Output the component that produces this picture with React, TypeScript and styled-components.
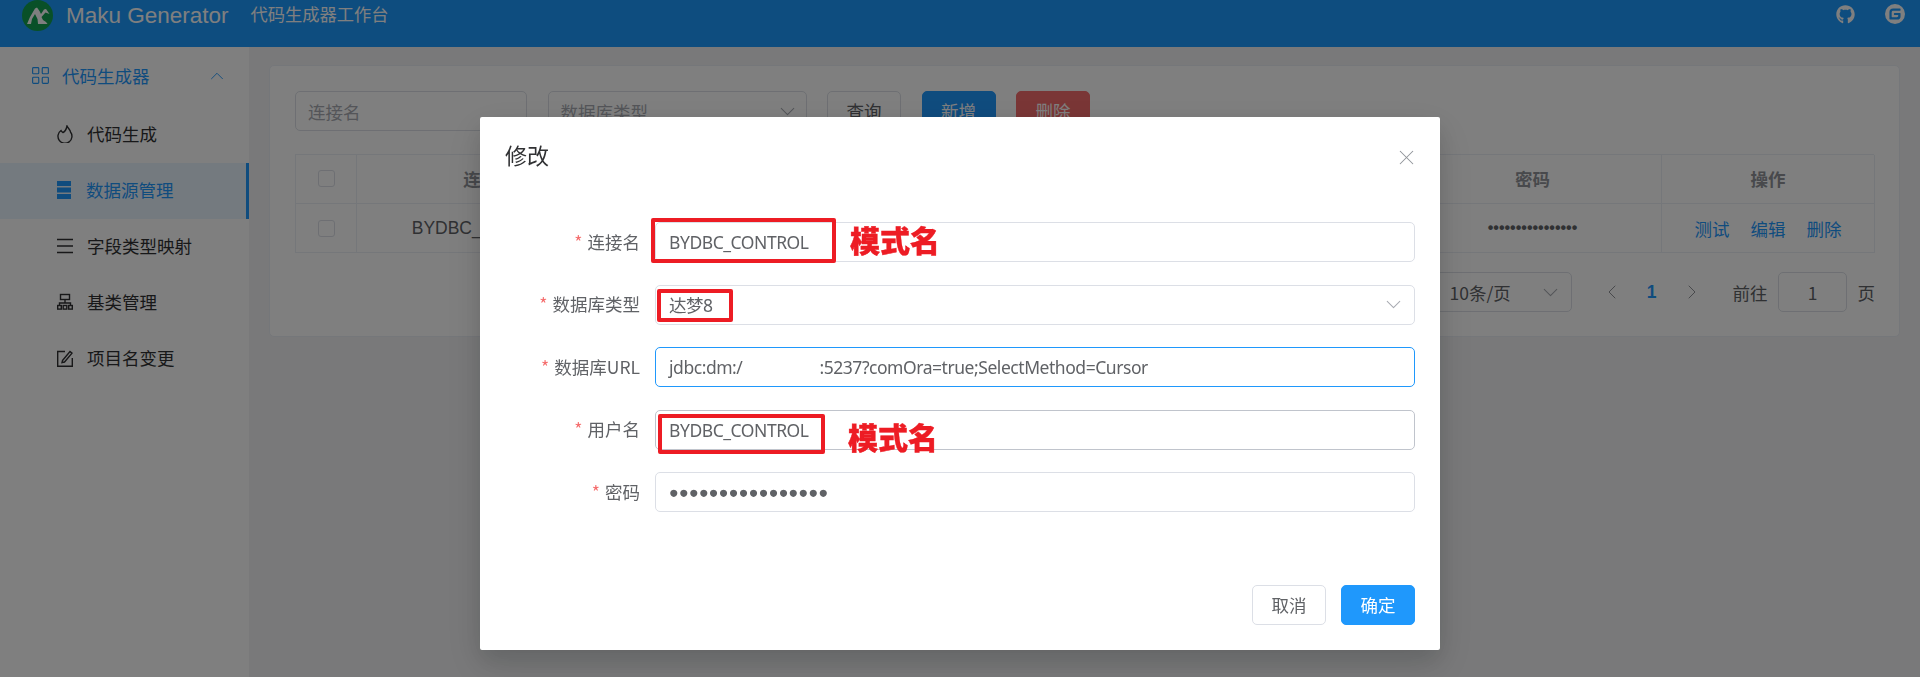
import styled, { createGlobalStyle } from "styled-components";
import { ChevronDown, ChevronLeft, ChevronRight, ChevronUp, LayoutGrid, X } from "lucide-react";
import { FaGithub } from "react-icons/fa";
import { SiGitee } from "react-icons/si";

const CJK = `"Noto Sans CJK SC", "Noto Sans", sans-serif`;
const ARIAL = `"Liberation Sans", "Noto Sans CJK SC", sans-serif`;
const BLUE = "#1f98fc";

const GlobalStyle = createGlobalStyle`
  html, body {
    margin: 0;
    height: 100%;
    overflow: hidden;
    background: #f2f3f5;
  }
  * { box-sizing: border-box; }
`;

const Page = styled.div`
  height: 677px;
  display: flex;
  flex-direction: column;
  font-family: ${ARIAL};
  font-size: 17.5px;
  color: #606266;
`;

const TopBar = styled.header`
  height: 47px;
  flex: none;
  background: #1c9aff;
  color: #fff;
  display: flex;
  padding: 0 15px 16px 22px;
`;
const Logo = styled.svg`
  width: 31px;
  height: 31px;
  margin-right: 13px;
`;
const Brand = styled.span`
  font-size: 22.5px;
  line-height: 31px;
  margin-right: 22px;
`;
const BrandSub = styled.span`
  font-family: ${CJK};
  font-size: 17.25px;
  line-height: 28px;
  flex: 1;
`;
const TopIcons = styled.div`
  display: flex;
  align-items: center;
  gap: 30px;
  height: 28px;
  svg { display: block; }
`;

const Body = styled.div`
  flex: 1;
  display: flex;
  min-height: 0;
`;
const Sidebar = styled.aside`
  width: 249px;
  flex: none;
  background: #fff;
  padding-top: 2px;
  font-family: ${CJK};
  color: #303133;
`;
const GroupTitle = styled.div`
  height: 56px;
  margin-bottom: 2px;
  padding: 0 21px 3px 29.5px;
  display: flex;
  align-items: center;
  gap: 11.5px;
  color: ${BLUE};
  span { flex: 1; }
`;
const MenuItem = styled.div<{ $active?: boolean }>`
  height: 56px;
  display: flex;
  align-items: center;
  gap: ${(p) => (p.$active ? 13 : 14)}px;
  padding: 0 0 3px 57px;
  color: ${(p) => (p.$active ? BLUE : "#303133")};
  background: ${(p) => (p.$active ? "#e9f4ff" : "transparent")};
  border-right: ${(p) => (p.$active ? `3px solid ${BLUE}` : "none")};
`;
const MenuIcon = styled.svg`
  width: 16px;
  height: 18px;
  flex: none;
`;

const Main = styled.main`
  flex: 1;
  min-width: 0;
  padding: 18px 20px;
`;
const Card = styled.section`
  background: #fff;
  border: 1px solid #ebeef5;
  border-radius: 5px;
  padding: 25px;
  height: 272px;
`;
const Filters = styled.div`
  display: flex;
  gap: 20.5px;
  margin-bottom: 23px;
`;
const FilterBox = styled.div<{ $w: number }>`
  width: ${(p) => p.$w}px;
  height: 40px;
  border: 1px solid #dcdfe6;
  border-radius: 5px;
  padding: 0 12px;
  display: flex;
  align-items: center;
  justify-content: space-between;
  color: #a8abb2;
  font-family: ${CJK};
`;
const Btn = styled.button<{ $kind?: "primary" | "danger" }>`
  width: 74px;
  height: 40px;
  border-radius: 5px;
  font-family: ${CJK};
  font-size: 17.5px;
  border: 1px solid ${(p) => (p.$kind === "primary" ? BLUE : p.$kind === "danger" ? "#f56c6c" : "#dcdfe6")};
  background: ${(p) => (p.$kind === "primary" ? BLUE : p.$kind === "danger" ? "#f56c6c" : "#fff")};
  color: ${(p) => (p.$kind ? "#fff" : "#606266")};
  padding: 0 0 2px;
`;
const Caret = styled(ChevronDown).attrs({ size: 25, strokeWidth: 1 })`
  flex: none;
  margin-right: -6px;
  color: #a8abb2;
`;

const Table = styled.div`
  display: grid;
  grid-template-columns: 61px 266px 260px 260px 261px 258px 213px;
  border-top: 1px solid #ebeef5;
  border-left: 1px solid #ebeef5;
`;
const Cell = styled.div<{ $head?: boolean }>`
  height: 49px;
  border-right: 1px solid #ebeef5;
  border-bottom: 1px solid #ebeef5;
  display: flex;
  align-items: center;
  justify-content: center;
  gap: 21px;
  padding-bottom: ${(p) => (p.$head ? 2 : 0)}px;
  color: ${(p) => (p.$head ? "#909399" : "#606266")};
  font-weight: ${(p) => (p.$head ? 700 : 400)};
  font-family: ${(p) => (p.$head ? CJK : ARIAL)};
`;
const Check = styled.i`
  width: 17px;
  height: 17px;
  border: 1px solid #dcdfe6;
  border-radius: 3px;
  background: #fff;
`;
const TableLink = styled.span`
  color: ${BLUE};
  font-family: ${CJK};
`;
const TableDots = styled.span`
  font-size: 16px;
  font-weight: 700;
`;

const Pager = styled.div`
  margin: 19px -1px 0 0;
  display: flex;
  justify-content: flex-end;
  align-items: center;
  height: 40px;
  font-family: ${CJK};
`;
const PageSize = styled.div`
  width: 137px;
  height: 40px;
  border: 1px solid #dcdfe6;
  border-radius: 5px;
  display: flex;
  align-items: center;
  justify-content: space-between;
  padding: 0 14px;
  margin-right: 28px;
`;
const PagerNum = styled.span`
  width: 56px;
  text-align: center;
  color: ${BLUE};
  font-family: ${ARIAL};
  font-weight: 700;
`;
const PagerLabel = styled.span`
  margin-left: 29px;
  color: #606266;
`;
const PagerInput = styled.div`
  width: 69px;
  height: 40px;
  margin: 0 10.5px;
  border: 1px solid #dcdfe6;
  border-radius: 5px;
  display: flex;
  align-items: center;
  justify-content: center;
`;
const PagerArrow = styled.span`
  display: flex;
  color: #909399;
`;

const Overlay = styled.div`
  position: fixed;
  inset: 0;
  background: rgba(0, 0, 0, 0.5);
  display: flex;
  justify-content: center;
  padding-top: 117px;
`;
const Dialog = styled.div`
  width: 960px;
  height: 533px;
  background: #fff;
  border-radius: 2px;
  padding: 25px;
  box-shadow: 0 15px 40px 5px rgba(0, 0, 0, 0.08), 0 10px 25px rgba(0, 0, 0, 0.12);
`;
const DialogHead = styled.div`
  display: flex;
  align-items: center;
  justify-content: space-between;
  height: 30px;
  margin-bottom: 50px;
  color: #303133;
  font-family: ${CJK};
  font-size: 22px;
  svg { margin-right: -3.5px; color: #909399; }
`;
const DialogTitle = styled.span`
  padding-bottom: 7px;
`;
const Form = styled.div`
  display: flex;
  flex-direction: column;
  gap: 22.5px;
`;
const Row = styled.div`
  display: flex;
  align-items: center;
  height: 40px;
`;
const Label = styled.label`
  width: 150px;
  flex: none;
  padding: 0 15px 2px 0;
  text-align: right;
  font-family: ${CJK};
  color: #606266;
  em {
    color: #f56c6c;
    font-style: normal;
    margin-right: 5px;
  }
`;
const Input = styled.div<{ $state?: "focus" | "hover" }>`
  position: relative;
  flex: 1;
  height: 40px;
  display: flex;
  align-items: center;
  padding: 0 14px 0 13px;
  border-radius: 5px;
  border: 1px solid
    ${(p) => (p.$state === "focus" ? BLUE : p.$state === "hover" ? "#c0c4cc" : "#dcdfe6")};
  font-family: "Noto Sans", "Noto Sans CJK SC", sans-serif;
  letter-spacing: -0.45px;
  color: #606266;
  white-space: nowrap;
`;
const Blank = styled.span`
  width: 77px;
  flex: none;
`;
const Dots = styled.span`
  font-family: "Liberation Sans", sans-serif;
  font-size: 16.5px;
  letter-spacing: 0;
  color: #606266;
`;
const Grow = styled.span`
  flex: 1;
`;
const RedBox = styled.i<{ $l: number; $t: number; $w: number; $h: number }>`
  position: absolute;
  left: ${(p) => p.$l}px;
  top: ${(p) => p.$t}px;
  width: ${(p) => p.$w}px;
  height: ${(p) => p.$h}px;
  border: 4px solid #ed1c24;
  border-radius: 2px;
`;
const Note = styled.b<{ $l: number; $t: number }>`
  position: absolute;
  left: ${(p) => p.$l}px;
  top: ${(p) => p.$t}px;
  color: #ed1c24;
  font-family: ${CJK};
  font-size: 30px;
  line-height: 40px;
  letter-spacing: 0;
  font-weight: 900;
  -webkit-text-stroke: 0.4px #ed1c24;
`;
const Footer = styled.div`
  margin-top: 73px;
  display: flex;
  justify-content: flex-end;
  gap: 15px;
`;

function App() {
  return (
    <Page>
      <GlobalStyle />
      <TopBar>
        <Logo viewBox="0 0 31 31">
          <circle cx="15.5" cy="15.5" r="15.5" fill="#12a150" />
          <path
            d="M5 24 L8 17 L13 8.5 L15 7.5 L17.5 11 L19 14 L22 9.5 L24 9 L27.5 14 L23.5 12.5 L19.5 17 L21 20 L24 22 L25.5 24 L16 24 L15.5 19 L13 14 L10 19 L9 24 Z"
            fill="#fff"
          />
        </Logo>
        <Brand>Maku Generator</Brand>
        <BrandSub>代码生成器工作台</BrandSub>
        <TopIcons>
          <FaGithub size={19} color="#fff" />
          <SiGitee size={20} color="#fff" />
        </TopIcons>
      </TopBar>
      <Body>
        <Sidebar>
          <GroupTitle>
            <LayoutGrid size={21} strokeWidth={1.3} />
            <span>代码生成器</span>
            <ChevronUp size={22} strokeWidth={1} />
          </GroupTitle>
          <MenuItem>
            <MenuIcon viewBox="0 0 16 18" fill="none" stroke="currentColor" strokeWidth="1.4">
              <path d="M4 5.5 A7 7 0 1 0 13.5 7 C13.5 5 11.5 4 10 1 C9.5 3.5 8 6.5 6 7.5 C5 7 4.3 6.2 4 5.5 Z" />
            </MenuIcon>
            代码生成
          </MenuItem>
          <MenuItem $active>
            <MenuIcon viewBox="0 0 16 18" fill="currentColor">
              <rect x="0" y="0" width="14" height="5" />
              <rect x="0" y="6.5" width="14" height="5" />
              <rect x="0" y="13" width="14" height="5" />
            </MenuIcon>
            数据源管理
          </MenuItem>
          <MenuItem>
            <MenuIcon viewBox="0 0 16 18" fill="none" stroke="currentColor" strokeWidth="1.6">
              <path d="M0 2.5 H16 M0 9 H16 M0 15.5 H16" />
            </MenuIcon>
            字段类型映射
          </MenuItem>
          <MenuItem>
            <MenuIcon viewBox="0 0 16 18" fill="none" stroke="currentColor" strokeWidth="1.4">
              <rect x="3.5" y="1.5" width="9" height="5" />
              <path d="M8 6.5 V10 M2.5 12.5 V10 H13.5 V12.5" />
              <rect x="0.7" y="12.5" width="3.6" height="3.6" />
              <rect x="6.2" y="12.5" width="3.6" height="3.6" />
              <rect x="11.7" y="12.5" width="3.6" height="3.6" />
            </MenuIcon>
            基类管理
          </MenuItem>
          <MenuItem>
            <MenuIcon viewBox="0 0 16 18" fill="none" stroke="currentColor" strokeWidth="1.4">
              <path d="M8 2.5 H0.7 V17.3 H15.3 V9" />
              <path d="M5.5 11.5 L13 2.5 L15 4.2 L7.5 13 L5 13.5 Z" />
            </MenuIcon>
            项目名变更
          </MenuItem>
        </Sidebar>
        <Main>
          <Card>
            <Filters>
              <FilterBox $w={232}>连接名</FilterBox>
              <FilterBox $w={259}>
                数据库类型
                <Caret />
              </FilterBox>
              <Btn>查询</Btn>
              <Btn $kind="primary">新增</Btn>
              <Btn $kind="danger">删除</Btn>
            </Filters>
            <Table>
              <Cell $head><Check /></Cell>
              <Cell $head>连接名</Cell>
              <Cell $head />
              <Cell $head />
              <Cell $head />
              <Cell $head>密码</Cell>
              <Cell $head>操作</Cell>
              <Cell><Check /></Cell>
              <Cell>BYDBC_CONTROL</Cell>
              <Cell />
              <Cell />
              <Cell />
              <Cell><TableDots>••••••••••••••••</TableDots></Cell>
              <Cell>
                <TableLink>测试</TableLink>
                <TableLink>编辑</TableLink>
                <TableLink>删除</TableLink>
              </Cell>
            </Table>
            <Pager>
              <PageSize>
                10条/页
                <Caret />
              </PageSize>
              <PagerArrow><ChevronLeft size={24} strokeWidth={1} /></PagerArrow>
              <PagerNum>1</PagerNum>
              <PagerArrow><ChevronRight size={24} strokeWidth={1} /></PagerArrow>
              <PagerLabel>前往</PagerLabel>
              <PagerInput>1</PagerInput>
              页
            </Pager>
          </Card>
        </Main>
      </Body>
      <Overlay>
        <Dialog>
          <DialogHead>
            <DialogTitle>修改</DialogTitle>
            <X size={25} strokeWidth={1} />
          </DialogHead>
          <Form>
            <Row>
              <Label><em>*</em>连接名</Label>
              <Input>
                BYDBC_CONTROL
                <RedBox $l={-5} $t={-5} $w={185} $h={45} />
                <Note $l={194} $t={-4}>模式名</Note>
              </Input>
            </Row>
            <Row>
              <Label><em>*</em>数据库类型</Label>
              <Input>
                <Grow>达梦8</Grow>
                <Caret />
                <RedBox $l={1} $t={3} $w={76} $h={33} />
              </Input>
            </Row>
            <Row>
              <Label><em>*</em>数据库URL</Label>
              <Input $state="focus">
                jdbc:dm:/
                <Blank />
                :5237?comOra=true;SelectMethod=Cursor
              </Input>
            </Row>
            <Row>
              <Label><em>*</em>用户名</Label>
              <Input $state="hover">
                BYDBC_CONTROL
                <RedBox $l={2} $t={3} $w={167} $h={40} />
                <Note $l={192} $t={5}>模式名</Note>
              </Input>
            </Row>
            <Row>
              <Label><em>*</em>密码</Label>
              <Input>
                <Dots>●●●●●●●●●●●●●●●●</Dots>
              </Input>
            </Row>
          </Form>
          <Footer>
            <Btn>取消</Btn>
            <Btn $kind="primary">确定</Btn>
          </Footer>
        </Dialog>
      </Overlay>
    </Page>
  );
}

export default App;
